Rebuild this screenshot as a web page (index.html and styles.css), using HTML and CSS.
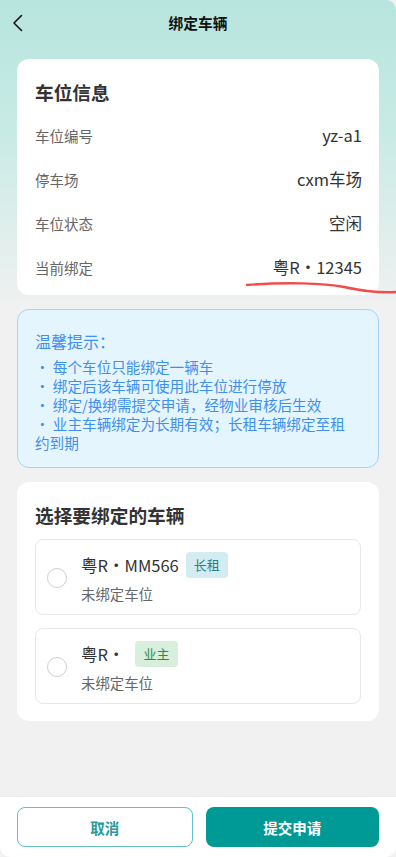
FILE: index.html
```html
<!DOCTYPE html>
<html lang="zh-CN">

<head>
    <meta charset="UTF-8">
    <meta name="viewport" content="width=device-width, initial-scale=1.0">
    <title>绑定车辆</title>
    <link rel="stylesheet" href="styles.css">
</head>

<body>

    <div class="page">
        <div class="header">
            <span class="back">
                <svg width="12" height="18" viewBox="0 0 12 18">
                    <path d="M9.5 1.5 L2 9 L9.5 16.5" fill="none" stroke="#111" stroke-width="1.6" stroke-linecap="round" stroke-linejoin="round" />
                </svg>
            </span>
            <div class="title">绑定车辆</div>
        </div>

        <div class="main">
            <div class="card info">
                <div class="card-title">车位信息</div>
                <div class="row"><span class="label">车位编号</span><span class="value">yz-a1</span></div>
                <div class="row"><span class="label">停车场</span><span class="value">cxm车场</span></div>
                <div class="row"><span class="label">车位状态</span><span class="value">空闲</span></div>
                <div class="row"><span class="label">当前绑定</span><span class="value">粤R・12345</span></div>
            </div>

            <div class="tips">
                <div class="tips-title">温馨提示：</div>
                <div class="tips-list">
                    <p>・ 每个车位只能绑定一辆车</p>
                    <p>・ 绑定后该车辆可使用此车位进行停放</p>
                    <p>・ 绑定/换绑需提交申请，经物业审核后生效</p>
                    <p>・ 业主车辆绑定为长期有效；长租车辆绑定至租约到期</p>
                </div>
            </div>

            <div class="card select">
                <div class="card-title">选择要绑定的车辆</div>
                <div class="car">
                    <span class="radio"></span>
                    <div class="car-info">
                        <div class="plate-line">
                            <span class="plate">粤R・MM566</span>
                            <span class="tag rent">长租</span>
                        </div>
                        <div class="sub">未绑定车位</div>
                    </div>
                </div>
                <div class="car">
                    <span class="radio"></span>
                    <div class="car-info">
                        <div class="plate-line">
                            <span class="plate">粤R・</span>
                            <span class="tag owner">业主</span>
                        </div>
                        <div class="sub">未绑定车位</div>
                    </div>
                </div>
            </div>
        </div>

        <div class="footer">
            <button class="btn cancel">取消</button>
            <button class="btn submit">提交申请</button>
        </div>
    </div>

    <!-- hand drawn mark under the current plate -->
    <svg class="scribble" width="152" height="16" viewBox="0 0 152 16">
        <path d="M3 6 C 40 3, 80 4, 100 8 C 115 11, 130 14, 152 13" fill="none" stroke="#f24c4c" stroke-width="2.4" stroke-linecap="round" />
    </svg>

</body>

</html>
```

FILE: styles.css
```css
body {
    font-family: "Noto Sans CJK SC", "Noto Sans", sans-serif;
    margin: 0;
    padding: 0;
    background-color: #f1f1f1;
    color: #333;
}

.page {
    display: flex;
    flex-direction: column;
    height: 100vh;
    background: linear-gradient(180deg, #b7e5de 0px, #c6eae4 120px, #f1f1f1 310px);
    border-top-right-radius: 10px;
    overflow: hidden;
}

.header {
    height: 45px;
    display: flex;
    align-items: center;
    justify-content: center;
    position: relative;
}

.back {
    position: absolute;
    left: 12px;
    top: 14px;
    display: flex;
}

.title {
    font-size: 14.7px;
    font-weight: bold;
    color: #111;
}

.main {
    flex: 1;
    padding: 14px 17px 0;
}

.card {
    background-color: #fff;
    border-radius: 12px;
}

.card-title {
    font-size: 18.7px;
    font-weight: bold;
    line-height: 25px;
    color: #333;
}

.info {
    padding: 20px 17px 6px 18px;
}

.info .card-title {
    margin-bottom: 9px;
}

.row {
    display: flex;
    justify-content: space-between;
    align-items: center;
    height: 44px;
}

.label {
    font-size: 14.5px;
    color: #666;
}

.value {
    font-size: 16.5px;
    color: #333;
}

.tips {
    margin-top: 14px;
    background-color: #e5f5fe;
    border: 1px solid #a3d5f7;
    border-radius: 12px;
    padding: 20px 26px 15px 17px;
    color: #3f8ff0;
}

.tips-title {
    font-size: 16px;
    line-height: 22px;
    margin-bottom: 5px;
}

.tips-list p {
    margin: 0;
    font-size: 14.6px;
    line-height: 19px;
}

.select {
    margin-top: 14px;
    padding: 20px 18px 17px 18px;
}

.select .card-title {
    margin-bottom: 12px;
}

.car {
    display: flex;
    align-items: center;
    border: 1px solid #e8e8e8;
    border-radius: 8px;
    padding: 12px 12px 10px 11px;
    margin-bottom: 13px;
}

.car:last-child {
    margin-bottom: 0;
}

.radio {
    width: 18px;
    height: 18px;
    border: 1.5px solid #cfcfcf;
    border-radius: 50%;
    margin-right: 14px;
    flex-shrink: 0;
}

.plate-line {
    display: flex;
    align-items: center;
    height: 26px;
}

.plate {
    font-size: 16.5px;
    color: #333;
}

.tag {
    font-size: 13px;
    height: 26px;
    line-height: 26px;
    padding: 0 8px;
    border-radius: 4px;
    margin-left: 7px;
}

.tag.rent {
    background-color: #d3ecf1;
    color: #2a7f86;
}

.tag.owner {
    background-color: #d7efdc;
    color: #2f8a3e;
    margin-left: 11px;
}

.sub {
    font-size: 14.4px;
    color: #666;
    line-height: 20px;
    margin-top: 6px;
}

.footer {
    display: flex;
    gap: 13px;
    background-color: #fff;
    border-top: 1px solid #ececec;
    padding: 10px 17px 10px;
    border-bottom-left-radius: 10px;
    border-bottom-right-radius: 10px;
}

.btn {
    flex: 1;
    height: 40px;
    border-radius: 8px;
    font-family: inherit;
    font-size: 14.5px;
    font-weight: bold;
    cursor: pointer;
}

.btn.cancel {
    background-color: #fff;
    border: 1px solid #62c2c2;
    color: #2a9a9a;
}

.btn.submit {
    background-color: #009a96;
    border: none;
    color: #fff;
}

.scribble {
    position: absolute;
    left: 244px;
    top: 279px;
}
```
